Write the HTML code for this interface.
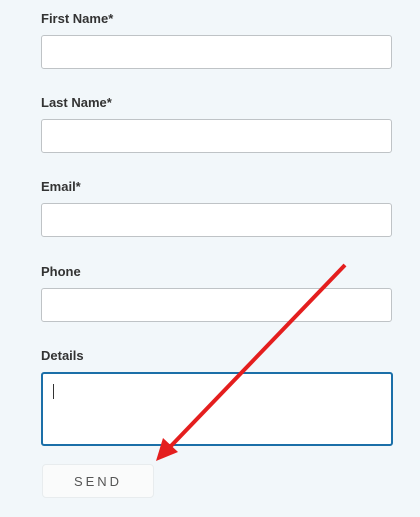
<!DOCTYPE html>
<html><head><style>
body{margin:0;width:420px;height:517px;background:#f2f7fa;font-family:"Liberation Sans",sans-serif;position:relative;overflow:hidden}
.l{position:absolute;left:41px;font-size:13px;font-weight:bold;color:#333}
.i{position:absolute;left:41px;width:349px;height:32px;background:#fff;border:1px solid #bfc3c6;border-radius:3px}
.t{position:absolute;left:41px;top:372px;width:348px;height:70px;background:#fff;border:2px solid #1b6fa8;border-radius:3px}
.b{position:absolute;left:42px;top:464px;width:110px;height:32px;background:#fafbfb;border:1px solid #e8ecee;border-radius:4px;text-align:center;line-height:33px;font-size:13px;letter-spacing:3px;color:#555}
</style></head><body>
<div class="l" style="top:11px">First Name*</div><div class="i" style="top:35px"></div>
<div class="l" style="top:95px">Last Name*</div><div class="i" style="top:119px"></div>
<div class="l" style="top:179px">Email*</div><div class="i" style="top:203px"></div>
<div class="l" style="top:264px">Phone</div><div class="i" style="top:288px"></div>
<div class="l" style="top:348px">Details</div>
<div class="t"><div style="position:absolute;left:10px;top:10px;width:1px;height:15px;background:#333"></div></div>
<div class="b">SEND</div>
<svg style="position:absolute;left:0;top:0" width="420" height="517"><line x1="345" y1="265" x2="170" y2="447" stroke="#e41e1e" stroke-width="4"/><polygon points="156,461 163,438 178,452" fill="#e41e1e"/></svg>
</body></html>
